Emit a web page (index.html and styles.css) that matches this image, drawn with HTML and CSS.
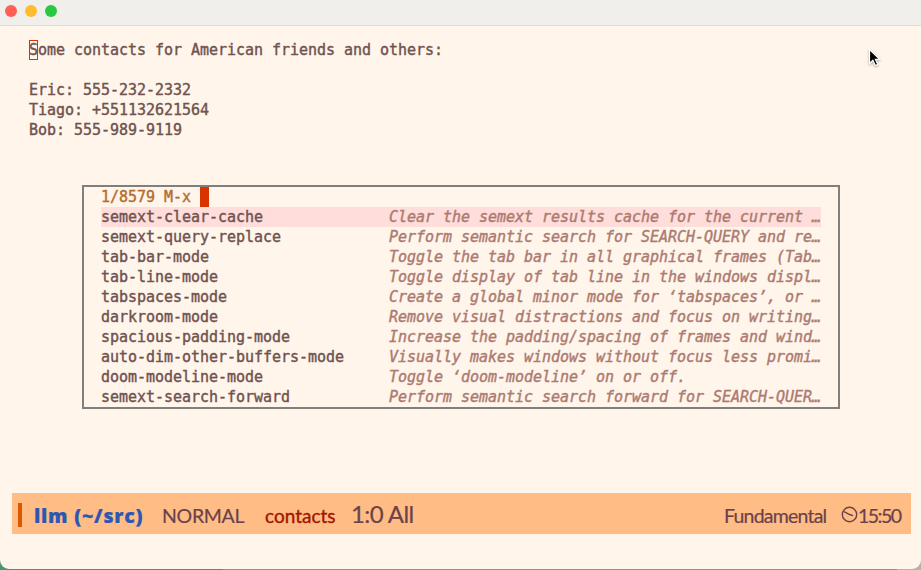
FILE: index.html
```html
<!DOCTYPE html>
<html lang="en">
<head>
<meta charset="utf-8">
<title>contacts</title>
<link rel="stylesheet" href="styles.css">
</head>
<body>
<div class="window">
  <header class="titlebar"><i class="light close"></i><i class="light minimize"></i><i class="light zoom"></i></header>
  <main class="buffer">Some contacts for American friends and others:

Eric: 555-232-2332
Tiago: +551132621564
Bob: 555-989-9119</main>
  <section class="palette">
    <div class="prompt">1/8579 M-x <span class="caret"></span></div>
    <div class="row selected"><span>semext-clear-cache</span><em>Clear the semext results cache for the current …</em></div>
    <div class="row"><span>semext-query-replace</span><em>Perform semantic search for SEARCH-QUERY and re…</em></div>
    <div class="row"><span>tab-bar-mode</span><em>Toggle the tab bar in all graphical frames (Tab…</em></div>
    <div class="row"><span>tab-line-mode</span><em>Toggle display of tab line in the windows displ…</em></div>
    <div class="row"><span>tabspaces-mode</span><em>Create a global minor mode for ‘tabspaces’, or …</em></div>
    <div class="row"><span>darkroom-mode</span><em>Remove visual distractions and focus on writing…</em></div>
    <div class="row"><span>spacious-padding-mode</span><em>Increase the padding/spacing of frames and wind…</em></div>
    <div class="row"><span>auto-dim-other-buffers-mode</span><em>Visually makes windows without focus less promi…</em></div>
    <div class="row"><span>doom-modeline-mode</span><em>Toggle ‘doom-modeline’ on or off.</em></div>
    <div class="row"><span>semext-search-forward</span><em>Perform semantic search forward for SEARCH-QUER…</em></div>
  </section>
  <footer class="modeline">
    <i class="accent"></i>
    <span class="project">llm (~/src)</span>
    <span class="state">NORMAL</span>
    <span class="file">contacts</span>
    <span class="position">1:0 All</span>
    <span class="mode">Fundamental</span>
    <svg class="clock" viewBox="0 0 17 17"><circle cx="8.5" cy="8.5" r="7.2"/><path d="M3.2 5.6 8.5 8.5l3.6 1.2"/></svg>
    <span class="time">15:50</span>
  </footer>
</div>
<svg class="pointer" viewBox="0 0 14 20"><path d="M1.5 1.5v14l3.4-3.2 2.4 5.2 2.5-1.1-2.4-5h4.3z"/></svg>
</body>
</html>
```
FILE: styles.css
```css
*, *::before { box-sizing: border-box; }
body {
  margin: 0;
  width: 921px;
  height: 570px;
  overflow: hidden;
  background: linear-gradient(90deg, #4f9272 0 223px, #929090 223px 897px, #b5b3b1 897px);
}
.window {
  height: 569px;
  display: flex;
  flex-direction: column;
  background: #fff5eb;
  border-radius: 0 0 9px 9px;
  overflow: hidden;
  color: #70524e;
  font: 15px/20px "DejaVu Sans Mono", monospace;
  letter-spacing: -0.031px;
  -webkit-text-stroke: 0.4px currentColor;
}
.titlebar {
  height: 26px;
  flex: none;
  display: flex;
  gap: 8px;
  padding: 5px;
  background: #f0efeb;
  border-bottom: 1px solid #dedad5;
}
.light { width: 12px; height: 12px; border-radius: 50%; }
.close { background: #ff5f57; }
.minimize { background: #febc2e; }
.zoom { background: #28c840; }
.buffer {
  position: relative;
  height: 100px;
  margin: 14px 0 0 29px;
  white-space: pre;
}
.buffer::before {
  content: "";
  position: absolute;
  left: 0;
  top: 0;
  width: 9px;
  height: 20px;
  border: 1px solid #d93400;
}
.palette {
  width: 758px;
  height: 224px;
  flex: none;
  margin: 45px 0 0 82px;
  padding: 0 17px;
  border: 2px solid #7f7f7d;
}
.prompt { display: flex; height: 20px; white-space: pre; color: #b56c2b; }
.caret { width: 9px; background: #d93400; }
.row { display: grid; grid-template-columns: 288px 432px; height: 20px; white-space: pre; }
.row em { color: #ad7a70; }
.selected { background: #ffdddb; }
.modeline {
  width: 899px;
  height: 41px;
  flex: none;
  margin: 84px 0 0 12px;
  padding: 0 10px 0 6px;
  display: flex;
  align-items: baseline;
  background: #ffbc85;
  color: #6b424a;
  font: 19.5px/41px Lato, sans-serif;
  white-space: pre;
  letter-spacing: 0;
  -webkit-text-stroke: 0.2px currentColor;
}
.accent { width: 4px; height: 24px; align-self: center; margin: 2px 12px 0 0; background: #db5700; }
.project { width: 128px; font-family: "Open Sans", sans-serif; font-weight: 800; color: #2c58b4; font-size: 19.5px; letter-spacing: 0.75px; }
.state { width: 103px; letter-spacing: -0.3px; }
.file { width: 86px; color: #a21400; font-size: 19px; -webkit-text-stroke: 0.35px currentColor; }
.position { font-size: 24px; letter-spacing: -0.6px; }
.mode { margin-left: auto; width: 117px; letter-spacing: -0.78px; }
.clock { width: 17px; height: 17px; align-self: center; margin-top: 2px; fill: none; stroke: currentColor; stroke-width: 1.4; }
.time { width: 43px; letter-spacing: -1.5px; }
.pointer {
  position: absolute;
  left: 868px;
  top: 48px;
  width: 14px;
  height: 20px;
  fill: #000;
  stroke: #fff;
  stroke-width: 1.2;
  filter: drop-shadow(0 1px 1px #0005);
}
```
